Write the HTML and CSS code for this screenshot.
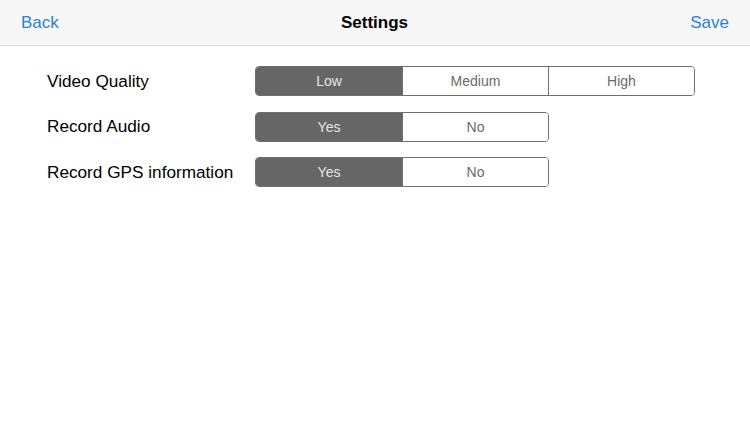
FILE: index.html
```html
<!DOCTYPE html>
<html>
<head>
<meta charset="utf-8">
<link rel="stylesheet" href="styles.css">
</head>
<body>
<header class="nav">
  <span class="nav-btn">Back</span>
  <span class="nav-title">Settings</span>
  <span class="nav-btn">Save</span>
</header>
<main class="settings">
  <div class="row">
    <div class="label">Video Quality</div>
    <div class="seg seg3">
      <div class="opt on">Low</div>
      <div class="opt">Medium</div>
      <div class="opt">High</div>
    </div>
  </div>
  <div class="row">
    <div class="label">Record Audio</div>
    <div class="seg">
      <div class="opt on">Yes</div>
      <div class="opt">No</div>
    </div>
  </div>
  <div class="row">
    <div class="label">Record GPS information</div>
    <div class="seg">
      <div class="opt on">Yes</div>
      <div class="opt">No</div>
    </div>
  </div>
</main>
</body>
</html>
```
FILE: styles.css
```css
* { box-sizing: border-box; }
html, body { margin: 0; padding: 0; background: #fff; }
body {
  font-family: "Liberation Sans", Arial, sans-serif;
  color: #000;
  width: 750px;
  height: 422px;
  overflow: hidden;
}
.nav {
  height: 46px;
  background: #f7f7f7;
  border-bottom: 1px solid #d8d8d8;
  display: flex;
  align-items: center;
  justify-content: space-between;
  padding: 0 21px;
}
.nav-btn {
  color: #2a7fd9;
  font-size: 17px;
}
.nav-title {
  font-size: 17px;
  font-weight: bold;
}
.settings {
  padding: 20px 0 0 47px;
  display: flex;
  flex-direction: column;
  gap: 15.5px;
}
.row {
  display: flex;
  align-items: center;
  height: 30px;
}
.label {
  width: 208px;
  font-size: 17.2px;
}
.seg {
  display: flex;
  height: 30px;
  border: 1px solid #6e6e6e;
  border-radius: 4px;
  overflow: hidden;
}
.opt {
  width: 146px;
  display: flex;
  align-items: center;
  justify-content: center;
  font-size: 14px;
  color: #6a6a6a;
  background: #fff;
}
.opt + .opt { border-left: 1px solid #6e6e6e; }
.opt.on {
  background: #666;
  color: #e6e6e6;
}
```
